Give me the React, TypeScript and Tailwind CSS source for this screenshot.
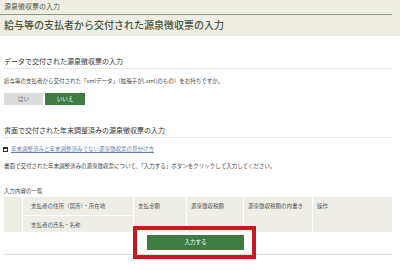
import React from 'react';

const cell = 'bg-[#eeeee6] px-[4px] pt-[5px] leading-[8px]';

export default function App() {
  return (
    <div
      className="w-[400px] h-[270px] overflow-hidden bg-white text-[#444] relative"
      style={{ fontFamily: '"Noto Sans CJK JP", "Noto Sans", sans-serif' }}
    >
      {/* Page header */}
      <div className="h-[36px] bg-[#eeeee5]">
        <div className="h-[15px] border-b border-[#8d9a82] mr-[8px] pl-[4px] pt-[2px] text-[7px] leading-[9px] text-[#4f5a44]">
          源泉徴収票の入力
        </div>
        <div className="mt-[3px] pl-[4px] text-[10px] leading-[14px] font-medium text-[#48533d]">
          給与等の支払者から交付された源泉徴収票の入力
        </div>
      </div>

      <div className="pl-[4px] pr-[8px]">
        {/* Data section */}
        <div className="mt-[20px] h-[13px] border-b border-dotted border-[#d9d9c2] text-[7px] leading-[11px] text-[#333]">
          データで交付された源泉徴収票の入力
        </div>
        <p className="mt-[8px] text-[5.5px] leading-[8px]">
          給与等の支払者から交付された「xmlデータ」（拡張子が[.xml]のもの）をお持ちですか。
        </p>
        <div className="mt-[8px] flex gap-[2px]">
          <button className="w-[39px] h-[12px] bg-[#dcdcdc] text-[#666] text-[5.5px] leading-[12px]">はい</button>
          <button className="w-[40px] h-[12px] bg-[#3f7c41] text-white text-[5.5px] leading-[12px]">いいえ</button>
        </div>

        {/* Paper section */}
        <div className="mt-[20px] h-[13px] border-b border-dotted border-[#d9d9c2] text-[7px] leading-[11px] text-[#333]">
          書面で交付された年末調整済みの源泉徴収票の入力
        </div>
        <div className="mt-[7px] flex items-center gap-[3px] text-[5.5px] leading-[8px]">
          <svg width="5" height="5" viewBox="0 0 5 5" className="-ml-[1px]">
            <rect x="0.5" y="0.5" width="4" height="4" fill="none" stroke="#333" strokeWidth="1" />
            <rect x="0" y="0" width="5" height="2" fill="#333" />
          </svg>
          <span className="text-[#6b7fae] underline">年末調整済みと年末調整済みでない源泉徴収票の見分け方</span>
        </div>
        <p className="mt-[9px] text-[5.5px] leading-[8px]">
          書面で交付された年末調整済みの源泉徴収票について、「入力する」ボタンをクリックして入力してください。
        </p>

        {/* List */}
        <p className="mt-[17px] text-[5.5px] leading-[8px]">入力内容の一覧</p>
        <div className="mt-[2px] grid grid-cols-[18px_110px_52px_56px_68px_1fr] grid-rows-[18px_16px] gap-px text-[5.5px] text-[#555]">
          <div className={`${cell} row-span-2`}></div>
          <div className={`${cell} pl-[8px]`}>支払者の住所（居所）・所在地</div>
          <div className={`${cell} row-span-2`}>支払金額</div>
          <div className={`${cell} row-span-2`}>源泉徴収税額</div>
          <div className={`${cell} row-span-2`}>源泉徴収税額の内書き</div>
          <div className={`${cell} row-span-2`}>操作</div>
          <div className={`${cell} pl-[8px]`}>支払者の氏名・名称</div>
        </div>
        <div className="h-[23px] border-b border-[#dddddd] pt-[3px] pl-[143px]">
          <div className="relative w-[97px] h-[15px]">
            <button className="block w-[97px] h-[15px] bg-[#3f7c44] text-white text-[5.5px] leading-[15px]">
              入力する
            </button>
            <div className="absolute -left-[14px] -top-[9px] w-[123px] h-[33px] border-[4px] border-[#c9181f]" />
          </div>
        </div>
      </div>
    </div>
  );
}
